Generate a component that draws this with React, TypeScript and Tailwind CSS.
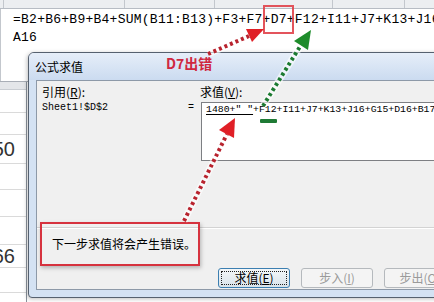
import React from 'react';

const MONO = "font-['Liberation_Mono','DejaVu_Sans_Mono',monospace]";
const CJK = "font-['Noto_Sans_CJK_SC','Noto_Sans',sans-serif]";

const TOP_COLS = [4, 121, 90, 118, 72];
const ROWS = [23, 22, 29, 26, 27, 28, 23, 25, 20];

function Accel({ k }: { k: string }) {
  return (
    <span>
      (<span className="underline underline-offset-1">{k}</span>)
    </span>
  );
}

export default function App() {
  return (
    <div className={`relative w-[434px] h-[302px] overflow-hidden bg-white text-black ${CJK}`}>
      {/* column header strip */}
      <div className="flex h-[9px] bg-[#eceef1] border-b border-[#b7bcc4]">
        {TOP_COLS.map((w, i) => (
          <div key={i} className="h-full border-r border-[#c3c7cd]" style={{ width: w }} />
        ))}
      </div>

      {/* formula bar */}
      <div className="flex h-[73px] border-b border-[#a9aeb6]">
        <div className="w-[5px] bg-[#eceef1] border-r border-[#c3c7cd]" />
        <div className={`pl-[12px] pt-[2px] text-[13px] tracking-[0.25px] leading-[18px] whitespace-nowrap ${MONO}`}>
          <div>=B2+B6+B9+B4+SUM(B11:B13)+F3+F7+D7+F12+I11+J7+K13+J16+G15+D16+B17</div>
          <div>A16</div>
        </div>
      </div>

      {/* sheet cells on the left */}
      <div className="w-[27px] border-r border-[#8a929c]">
        <div className="h-[8px] bg-[#e4e6e9] border-b border-[#c9cdd2]" />
        {ROWS.map((h, i) => (
          <div
            key={i}
            className="flex items-center justify-end pr-[11px] border-b border-[#dadada] text-[20px] text-[#333] font-['Liberation_Sans',sans-serif] leading-none overflow-hidden"
            style={{ height: h }}
          >
            {i === 2 ? '50' : i === 6 ? '66' : ''}
          </div>
        ))}
      </div>

      {/* dialog window */}
      <div className="absolute left-[28px] top-[52px] w-[430px] h-[246px] rounded-tl-[6px] rounded-bl-[4px] border border-[#56616f] bg-[#d4e2f3] shadow-[-1px_1px_4px_rgba(0,0,0,0.25)]">
        <div className="h-[27px] rounded-tl-[5px] bg-gradient-to-b from-[#e6eef9] to-[#cbdbf0] flex items-center pl-[6px] text-[12px]">
          公式求值
        </div>
        <div className="ml-[7px] h-[210px] border border-[#8d99a8] bg-[#f0f0f0] flex flex-col text-[12px]">
          <div className="flex pl-[5px] pt-[3px] leading-[16px]">
            <div className="w-[158px]">
              引用<Accel k="R" />:
            </div>
            <div>
              求值<Accel k="V" />:
            </div>
          </div>
          <div className={`flex pl-[5px] mt-[2px] text-[10px] ${MONO}`}>
            <div className="w-[146px] leading-[12px]">Sheet1!$D$2</div>
            <div className="w-[13px] leading-[12px]">=</div>
            <div className="flex-1 h-[59px] border border-[#7d7f83] bg-white pl-[4px] pt-px text-[9.8px] leading-[12px] whitespace-nowrap overflow-hidden">
              <span className="underline underline-offset-2">1480+" "</span>
              +F12+I11+J7+K13+J16+G15+D16+B17
            </div>
          </div>
          <div className="mt-[66px] h-[2px] border-t border-[#d3d3d3] border-b border-b-white" />
          <div className="mt-[8px] pl-[15px] leading-[14px]">下一步求值将会产生错误。</div>
          <div className="mt-[17px] flex pl-[181px] gap-[11px]">
            <div className="w-[73px] h-[20px] rounded-[3px] border border-[#3c7fb1] bg-gradient-to-b from-[#f4f7f9] to-[#d9e3ea] p-[2px]">
              <div className="h-full border border-dotted border-[#222] flex items-center justify-center leading-none">
                求值<Accel k="E" />
              </div>
            </div>
            <div className="w-[73px] h-[20px] rounded-[3px] border border-[#b5b9bd] bg-[#f4f4f4] flex items-center justify-center text-[#9a9a9a] leading-none">
              步入<Accel k="I" />
            </div>
            <div className="w-[73px] h-[20px] rounded-[3px] border border-[#b5b9bd] bg-[#f4f4f4] flex items-center justify-center text-[#9a9a9a] leading-none">
              步出<Accel k="O" />
            </div>
          </div>
        </div>
      </div>

      {/* annotations */}
      <div className="absolute left-[263px] top-[5px] w-[31px] h-[29px] border-2 border-[#e0414a]/90" />
      <div className="absolute left-[40px] top-[222px] w-[160px] h-[44px] border-2 border-[#d6323e] shadow-[1px_2px_4px_rgba(0,0,0,0.25)]" />
      <div className="absolute left-[166px] top-[54px] text-[14px] font-bold leading-[18px] text-[#d0283f] font-['Noto_Sans_CJK_SC',sans-serif]">
        D7出错
      </div>

      <svg className="absolute inset-0 pointer-events-none" width="434" height="302" viewBox="0 0 434 302">
        {/* red arrow to D7 */}
        <line x1="208" y1="54" x2="249" y2="36" stroke="#fff" strokeOpacity="0.6" strokeWidth="7" />
        <line x1="208" y1="54" x2="249" y2="36" stroke="#b8232e" strokeWidth="4" strokeDasharray="3 3" />
        <polygon points="264,29 246,29 252,42" fill="#e01f26" />

        {/* red arrow to value */}
        <line x1="184" y1="221" x2="227" y2="134" stroke="#fff" strokeOpacity="0.6" strokeWidth="7" />
        <line x1="184" y1="221" x2="227" y2="134" stroke="#b8232e" strokeWidth="4" strokeDasharray="3 3" />
        <polygon points="235,118 219,130 234,138" fill="#e01f26" />

        {/* green arrow */}
        <line x1="263" y1="106" x2="301" y2="45" stroke="#fff" strokeOpacity="0.6" strokeWidth="7" />
        <line x1="263" y1="106" x2="301" y2="45" stroke="#1b7a30" strokeWidth="4" strokeDasharray="3 3" />
        <polygon points="311,30 294,41 308,50" fill="#1e8c2b" />

        <rect x="260" y="119" width="17" height="4" rx="1" fill="#1f7a35" />
      </svg>
    </div>
  );
}
